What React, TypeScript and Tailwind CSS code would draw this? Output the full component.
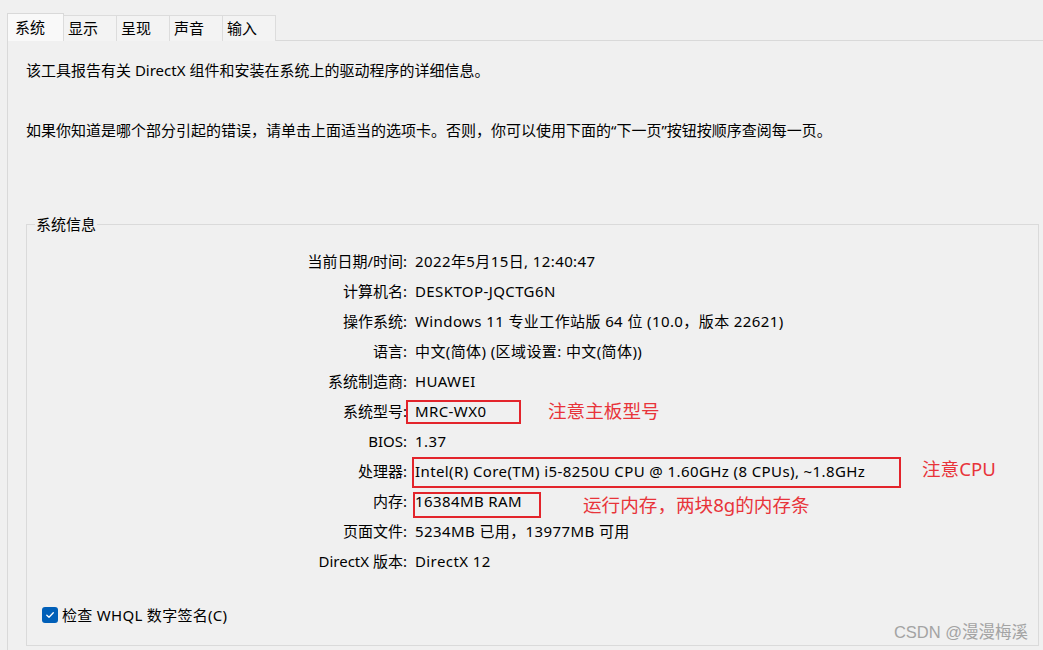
import type { ReactNode } from 'react';

const font = { fontFamily: '"Noto Sans", "Noto Sans CJK SC", sans-serif' };

const tabs = ['系统', '显示', '呈现', '声音', '输入'];

interface InfoRow {
  label: string;
  value: string;
  box?: string;
  note?: ReactNode;
}

const rows: InfoRow[] = [
  { label: '当前日期/时间:', value: '2022年5月15日, 12:40:47' },
  { label: '计算机名:', value: 'DESKTOP-JQCTG6N' },
  { label: '操作系统:', value: 'Windows 11 专业工作站版 64 位 (10.0，版本 22621)' },
  { label: '语言:', value: '中文(简体) (区域设置: 中文(简体))' },
  { label: '系统制造商:', value: 'HUAWEI' },
  {
    label: '系统型号:',
    value: 'MRC-WX0',
    box: 'top-[4px] -left-[9px] w-[115px] h-[24px]',
    note: <span className="absolute left-[133px] top-[3px] text-[18.6px] leading-[24px] text-[#e8343a] whitespace-nowrap">注意主板型号</span>,
  },
  { label: 'BIOS:', value: '1.37' },
  {
    label: '处理器:',
    value: 'Intel(R) Core(TM) i5-8250U CPU @ 1.60GHz (8 CPUs), ~1.8GHz',
    box: 'top-[1px] -left-[3px] w-[489px] h-[31px]',
    note: <span className="absolute left-[507px] top-[1px] text-[18.6px] leading-[24px] text-[#e8343a] whitespace-nowrap">注意CPU</span>,
  },
  {
    label: '内存:',
    value: '16384MB RAM',
    box: 'top-[6px] -left-[2px] w-[128px] h-[26px]',
    note: <span className="absolute left-[168px] top-[7px] text-[18.6px] leading-[24px] text-[#e8343a] whitespace-nowrap">运行内存，两块8g的内存条</span>,
  },
  { label: '页面文件:', value: '5234MB 已用，13977MB 可用' },
  { label: 'DirectX 版本:', value: 'DirectX 12' },
];

export default function App() {
  return (
    <div className="relative w-[1043px] h-[650px] overflow-hidden bg-[#f0f0f0] text-[15px] text-black" style={font}>
      {/* tab strip */}
      <div className="flex items-end pl-[7px] pt-[13px] h-[41px] relative z-10">
        {tabs.map((t, i) =>
          i === 0 ? (
            <div key={t} className="h-[28px] w-[57px] pl-[7px] pt-[1px] bg-[#f9f9f9] border border-b-0 border-[#d9d9d9] leading-[24px]">
              {t}
            </div>
          ) : (
            <div key={t} className="h-[26px] pl-[4px] pr-[6px] -ml-px bg-[#f3f3f3] border border-b-0 border-[#dcdcdc] leading-[24px]">
              <span className="inline-block w-[42px]">{t}</span>
            </div>
          )
        )}
      </div>

      {/* tab panel */}
      <div className="-mt-px ml-[7px] border-l border-t border-[#d9d9d9] pl-[18px] pt-[19px] h-[620px]">
        <p className="leading-[20px]">该工具报告有关 DirectX 组件和安装在系统上的驱动程序的详细信息。</p>
        <p className="mt-[40px] leading-[20px]">
          如果你知道是哪个部分引起的错误，请单击上面适当的选项卡。否则，你可以使用下面的“下一页”按钮按顺序查阅每一页。
        </p>

        <fieldset className="mt-[74px] w-[1013px] h-[432px] border border-[#dadada] px-[8px]">
          <legend className="px-[1px] leading-[20px]">系统信息</legend>

          <div className="flex flex-col pt-[12px]">
            {rows.map(r => (
              <div key={r.label} className="flex h-[30px] items-center">
                <div className="w-[372px] text-right whitespace-nowrap">{r.label}</div>
                <div className="relative ml-[8px] h-full flex items-center whitespace-nowrap">
                  {r.box && <span className={`absolute border-2 border-[#e3242b] ${r.box}`} />}
                  <span className="relative tracking-[0.4px]">{r.value}</span>
                  {r.note}
                </div>
              </div>
            ))}
          </div>

          <label className="mt-[29px] ml-[7px] flex items-center gap-[4px] leading-[20px] tracking-[0.3px]">
            <span className="w-[16px] h-[16px] rounded-[3px] bg-[#005fb8] flex items-center justify-center">
              <svg width="10" height="10" viewBox="0 0 10 10" fill="none">
                <path d="M1.8 5.2 L4 7.3 L8.3 2.8" stroke="white" strokeWidth="1.3" strokeLinecap="round" strokeLinejoin="round" />
              </svg>
            </span>
            检查 WHQL 数字签名(C)
          </label>
        </fieldset>
      </div>

      <div className="absolute right-[15px] bottom-[8px] text-[16.5px] leading-[20px] text-[#a3a3a3]" style={{ fontFamily: '"Liberation Sans", "Noto Sans CJK SC", sans-serif' }}>
        CSDN @漫漫梅溪
      </div>
    </div>
  );
}
